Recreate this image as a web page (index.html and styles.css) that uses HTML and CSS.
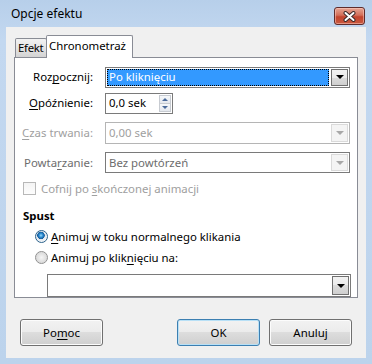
FILE: index.html
```html
<!DOCTYPE html>
<html lang="pl">
<head>
  <meta charset="UTF-8">
  <title>Opcje efektu</title>
  <link rel="stylesheet" href="styles.css">
</head>
<body>
<div class="window">
  <div class="titlebar">
    <span class="title">Opcje efektu</span>
    <div class="close">
      <svg width="13" height="11" viewBox="0 0 13 11">
        <path d="M2.5 2 L10.5 9 M10.5 2 L2.5 9" stroke="#3a2a2a" stroke-width="4" stroke-linecap="round"/>
        <path d="M2.5 2 L10.5 9 M10.5 2 L2.5 9" stroke="#ffffff" stroke-width="2" stroke-linecap="round"/>
      </svg>
    </div>
  </div>
  <div class="client">
    <div class="tabs">
      <div class="tab">Efekt</div>
      <div class="tab active">Chronometraż</div>
    </div>
    <div class="panel">
      <div class="row row_start">
        <span class="lbl">Roz<u>p</u>ocznij:</span>
        <div class="field combo focus">
          <span class="value"><span class="sel">Po kliknięciu</span></span>
          <span class="drop"><i class="tri"></i></span>
        </div>
      </div>
      <div class="row row_delay">
        <span class="lbl"><u>O</u>późnienie:</span>
        <div class="field spin">
          <span class="value">0,0 sek</span>
          <span class="spin_btns">
            <span class="spin_btn"><i class="tri_up"></i></span>
            <span class="spin_btn"><i class="tri_down"></i></span>
          </span>
        </div>
      </div>
      <div class="row row_gap disabled">
        <span class="lbl"><u>C</u>zas trwania:</span>
        <div class="field combo off">
          <span class="value">0,00 sek</span>
          <span class="drop"><i class="tri"></i></span>
        </div>
      </div>
      <div class="row row_gap grey">
        <span class="lbl">Powta<u>r</u>zanie:</span>
        <div class="field combo half">
          <span class="value">Bez powtórzeń</span>
          <span class="drop"><i class="tri"></i></span>
        </div>
      </div>
      <div class="check_row disabled">
        <span class="checkbox"></span>
        <span>Cofnij po <u>s</u>kończonej animacji</span>
      </div>
      <div class="section">Spust</div>
      <div class="radio_row first">
        <span class="radio on"></span>
        <span><u>A</u>nimuj w toku normalnego klikania</span>
      </div>
      <div class="radio_row">
        <span class="radio"></span>
        <span>Animuj po klik<u>n</u>ięciu na:</span>
      </div>
      <div class="field combo wide">
        <span class="value"></span>
        <span class="drop"><i class="tri"></i></span>
      </div>
    </div>
    <div class="buttons">
      <button class="btn">Po<u>m</u>oc</button>
      <span class="spacer"></span>
      <button class="btn default">OK</button>
      <button class="btn">Anuluj</button>
    </div>
  </div>
</div>
</body>
</html>
```

FILE: styles.css
```css
html, body {
  margin: 0;
  padding: 0;
}
body {
  font-family: "Noto Sans", "Open Sans", sans-serif;
  font-size: 11.4px;
  color: #000;
}
u {
  text-decoration-thickness: 1px;
  text-underline-offset: 2px;
}
.window {
  width: 372px;
  height: 364px;
  background: linear-gradient(#b7cfea, #c3d8f0 40px, #bcd3ec);
  display: flex;
  flex-direction: column;
}
.titlebar {
  height: 27px;
  display: flex;
  align-items: flex-start;
}
.title {
  margin: 6px 0 0 11px;
  line-height: 16px;
  font-size: 12px;
}
.close {
  margin: 7px 7px 0 auto;
  width: 29px;
  height: 16px;
  border: 1px solid #5e2c2c;
  border-radius: 3px;
  background: linear-gradient(#e6a594, #d36f5a 45%, #c2442e 55%, #c9593f);
  box-shadow: inset 0 0 0 1px rgba(255, 210, 200, 0.5);
  display: flex;
  align-items: center;
  justify-content: center;
}
.close svg {
  display: block;
}
.client {
  margin: 0 6px;
  height: 331px;
  background: #f0f0f0;
  display: flex;
  flex-direction: column;
}
.tabs {
  display: flex;
  align-items: flex-end;
  margin: 8px 0 0 9px;
  height: 22px;
}
.tab {
  box-sizing: border-box;
  width: 32px;
  height: 19px;
  line-height: 18px;
  padding-left: 2px;
  letter-spacing: -0.3px;
  border: 1px solid #898c95;
  border-bottom: none;
  border-radius: 2px 2px 0 0;
  background: linear-gradient(#f2f2f2, #e4e4e4 50%, #d3d3d3);
}
.tab.active {
  width: 87px;
  height: 23px;
  line-height: 20px;
  padding-left: 2px;
  letter-spacing: 0;
  background: #fff;
  position: relative;
  z-index: 1;
  margin-bottom: -1px;
  margin-left: -1px;
}
.panel {
  margin: 0 8px;
  height: 239px;
  border: 1px solid #898c95;
  background: #fff;
  padding: 0 7px 0 0;
  display: flex;
  flex-direction: column;
}
.row {
  display: flex;
  align-items: center;
  height: 22px;
}
.row_start {
  margin-top: 9px;
  height: 21px;
}
.row_delay {
  margin-top: 5px;
}
.row_gap {
  margin-top: 8px;
}
.lbl {
  width: 78px;
  margin-right: 12px;
  text-align: right;
  line-height: 16px;
}
.field {
  box-sizing: border-box;
  height: 100%;
  border: 1px solid #7a7a7a;
  background: #fff;
  display: flex;
  align-items: stretch;
}
.combo {
  width: 245px;
}
.value {
  flex: 1;
  display: flex;
  align-items: center;
  padding-left: 3px;
  line-height: 16px;
}
.focus .value {
  padding: 1px;
}
.sel {
  flex: 1;
  align-self: stretch;
  display: flex;
  align-items: center;
  padding-left: 2px;
  background: #3399ff;
  color: #fff;
  outline: 1px dotted #000;
  outline-offset: -1px;
}
.drop {
  width: 15px;
  margin: 1px;
  border: 1px solid #707070;
  background: linear-gradient(#f2f2f2, #ebebeb 50%, #dcdcdc 50%, #cfcfcf);
  display: flex;
  align-items: center;
  justify-content: center;
}
.tri {
  width: 0;
  height: 0;
  border-left: 4px solid transparent;
  border-right: 4px solid transparent;
  border-top: 4px solid #000;
}
.off {
  border-color: #b5b5b5;
}
.disabled {
  color: #a0a0a0;
}
.grey {
  color: #6d6d6d;
}
.off .drop,
.half .drop {
  border-color: #dadada;
  background: #f4f4f4;
}
.off .tri,
.half .tri {
  border-top-color: #a8a8a8;
}
.spin {
  width: 68px;
}
.spin_btns {
  width: 12px;
  margin: 1px;
  display: flex;
  flex-direction: column;
}
.spin_btn {
  flex: 1;
  border: 1px solid #c7cbd1;
  background: linear-gradient(#f6f8fa, #e4e8ee);
  display: flex;
  align-items: center;
  justify-content: center;
}
.spin_btn + .spin_btn {
  border-top: none;
}
.tri_up,
.tri_down {
  width: 0;
  height: 0;
  border-left: 3px solid transparent;
  border-right: 3px solid transparent;
}
.tri_up {
  border-bottom: 3px solid #4a6a9a;
}
.tri_down {
  border-top: 3px solid #4a6a9a;
}
.check_row {
  display: flex;
  align-items: center;
  margin: 9px 0 0 8px;
  height: 13px;
  line-height: 16px;
}
.checkbox {
  box-sizing: border-box;
  width: 13px;
  height: 13px;
  border: 1px solid #b8b8b8;
  background: linear-gradient(#f4f4f4, #fdfdfd);
  margin-right: 5px;
}
.section {
  margin: 13px 0 0 8px;
  font-weight: bold;
  line-height: 16px;
}
.radio_row {
  display: flex;
  align-items: center;
  margin: 6px 0 0 20px;
  height: 13px;
  line-height: 16px;
}
.radio_row + .radio_row {
  margin-top: 8px;
}
.radio {
  box-sizing: border-box;
  width: 13px;
  height: 13px;
  border-radius: 50%;
  border: 1px solid #8f8f8f;
  background: radial-gradient(circle, #f5f5f5 0, #dcdcdc 5px, #f2f2f2 6px);
  margin-right: 3px;
}
.radio.on {
  border-color: #2c628b;
  background: radial-gradient(circle at 45% 40%, #9ad8fa 0, #2a8ad0 2px, #145a9a 3.5px, #dfe6ed 4px, #f2f5f8 6px);
}
.wide {
  width: 304px;
  height: 23px;
  margin: 10px 0 0 32px;
}
.buttons {
  display: flex;
  margin: 21px 14px 0;
  gap: 9px;
}
.spacer {
  flex: 1;
}
.btn {
  width: 83px;
  height: 27px;
  padding: 0;
  font: inherit;
  color: #000;
  border: 1px solid #707070;
  border-radius: 3px;
  background: linear-gradient(#f2f2f2, #ebebeb 50%, #dddddd 50%, #cfcfcf);
  box-shadow: inset 0 0 0 1px #fcfcfc;
}
.btn.default {
  border-color: #3c7fb1;
  box-shadow: inset 0 0 0 1px #b8e0f6;
}
```
